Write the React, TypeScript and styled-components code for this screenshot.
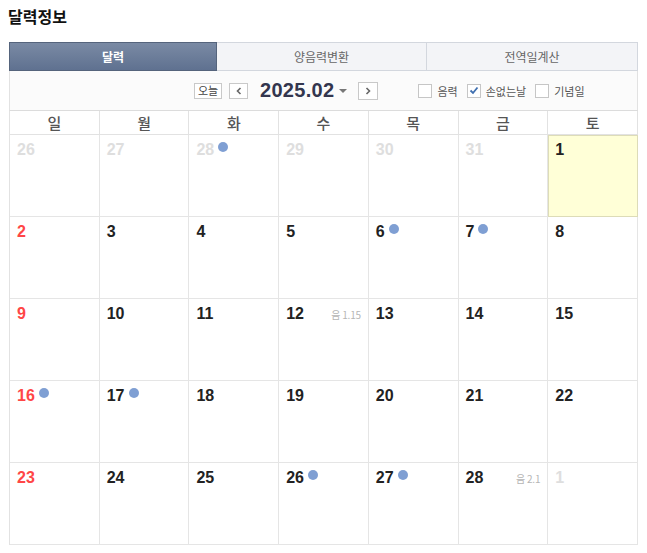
import React, { FunctionComponent } from 'react'
import styled, { createGlobalStyle, css } from 'styled-components'

const GlobalStyle = createGlobalStyle`
  html, body {
    margin: 0;
    padding: 0;
    background: #fff;
  }
  body {
    font-family: "Noto Sans CJK KR", "Noto Sans", sans-serif;
  }
`

const Page = styled.div`
  padding: 4px 9px 0 9px;
  width: 629px;
`

const Title = styled.h1`
  margin: 0 0 0 -1px;
  height: 38px;
  font-size: 16px;
  font-weight: 700;
  color: #111;
  line-height: 24px;
`

const Tabs = styled.div`
  display: grid;
  grid-template-columns: 208px 210px 1fr;
  height: 29px;
`

const TabButton = styled.div<{ $active?: boolean }>`
  display: flex;
  align-items: center;
  justify-content: center;
  font-size: 12px;
  color: #666;
  background: #f3f4f7;
  border: 1px solid #d3d7de;
  border-left: none;
  ${({ $active }) =>
    $active &&
    css`
      color: #fff;
      font-weight: 700;
      background: linear-gradient(#7a8aa4, #5f7190);
      border: 1px solid #55647c;
    `}
`

const Toolbar = styled.div`
  display: flex;
  align-items: center;
  height: 39px;
  padding-left: 184px;
  background: #fbfbfb;
  border-left: 1px solid #e2e2e2;
  border-right: 1px solid #e2e2e2;
  box-sizing: border-box;
`

const SmallButton = styled.span<{ $w: number }>`
  display: inline-flex;
  align-items: center;
  justify-content: center;
  width: ${({ $w }) => $w}px;
  height: 16px;
  box-sizing: border-box;
  border: 1px solid #c9c9c9;
  background: #fff;
  font-size: 11px;
  color: #444;
  line-height: 1;
`

const MonthTitle = styled.span`
  display: inline-flex;
  align-items: center;
  margin: 0 11px 0 12px;
  font-family: "Liberation Sans", Arial, sans-serif;
  font-size: 20px;
  font-weight: 700;
  color: #33364e;
  letter-spacing: 0.3px;
`

const Caret = styled.span`
  margin-left: 5px;
  width: 0;
  height: 0;
  border-left: 4px solid transparent;
  border-right: 4px solid transparent;
  border-top: 4px solid #777;
`

const Checks = styled.div`
  display: flex;
  align-items: center;
  margin-left: 40px;
  gap: 9px;
`

const CheckItem = styled.label`
  display: inline-flex;
  align-items: center;
  gap: 5px;
  font-size: 11px;
  color: #555;
`

const Box = styled.span`
  display: inline-flex;
  align-items: center;
  justify-content: center;
  width: 12px;
  height: 12px;
  border: 1px solid #c6c6c6;
  background: #fff;
`

const Grid = styled.div`
  display: grid;
  grid-template-columns: repeat(7, 1fr);
  border-left: 1px solid #e2e2e2;
  border-top: 1px solid #dcdcdc;
`

const HeadCell = styled.div`
  height: 23px;
  display: flex;
  align-items: center;
  justify-content: center;
  font-size: 15px;
  font-weight: 500;
  color: #555;
  border-right: 1px solid #e2e2e2;
  border-bottom: 1px solid #e2e2e2;
`

const DayCell = styled.div<{ $today?: boolean }>`
  height: 82px;
  padding: 5px 7px 0 7px;
  box-sizing: border-box;
  border-right: 1px solid #e5e5e5;
  border-bottom: 1px solid #e5e5e5;
  display: flex;
  align-items: flex-start;
  ${({ $today }) =>
    $today &&
    css`
      background: #ffffd7;
      outline: 1px solid #dddcb8;
      outline-offset: -1px;
    `}
`

const DayNum = styled.span<{ $tone: 'normal' | 'sun' | 'other' }>`
  font-family: "Liberation Sans", Arial, sans-serif;
  font-size: 16px;
  font-weight: 700;
  line-height: 20px;
  color: ${({ $tone }) =>
    $tone === 'sun' ? '#ff4646' : $tone === 'other' ? '#dedede' : '#222'};
`

const Dot = styled.span`
  display: inline-block;
  width: 10px;
  height: 10px;
  margin: 2px 0 0 4px;
  border-radius: 50%;
  background: #7f9fd3;
`

const Lunar = styled.span`
  margin-left: auto;
  padding-top: 3px;
  font-size: 10px;
  color: #b5b5b5;
  letter-spacing: -0.2px;
`

type Day = { n: number; tone: 'normal' | 'sun' | 'other'; dot?: boolean; lunar?: string; today?: boolean }

const weeks: Day[][] = [
  [
    { n: 26, tone: 'other' },
    { n: 27, tone: 'other' },
    { n: 28, tone: 'other', dot: true },
    { n: 29, tone: 'other' },
    { n: 30, tone: 'other' },
    { n: 31, tone: 'other' },
    { n: 1, tone: 'normal', today: true },
  ],
  [
    { n: 2, tone: 'sun' },
    { n: 3, tone: 'normal' },
    { n: 4, tone: 'normal' },
    { n: 5, tone: 'normal' },
    { n: 6, tone: 'normal', dot: true },
    { n: 7, tone: 'normal', dot: true },
    { n: 8, tone: 'normal' },
  ],
  [
    { n: 9, tone: 'sun' },
    { n: 10, tone: 'normal' },
    { n: 11, tone: 'normal' },
    { n: 12, tone: 'normal', lunar: '음 1.15' },
    { n: 13, tone: 'normal' },
    { n: 14, tone: 'normal' },
    { n: 15, tone: 'normal' },
  ],
  [
    { n: 16, tone: 'sun', dot: true },
    { n: 17, tone: 'normal', dot: true },
    { n: 18, tone: 'normal' },
    { n: 19, tone: 'normal' },
    { n: 20, tone: 'normal' },
    { n: 21, tone: 'normal' },
    { n: 22, tone: 'normal' },
  ],
  [
    { n: 23, tone: 'sun' },
    { n: 24, tone: 'normal' },
    { n: 25, tone: 'normal' },
    { n: 26, tone: 'normal', dot: true },
    { n: 27, tone: 'normal', dot: true },
    { n: 28, tone: 'normal', lunar: '음 2.1' },
    { n: 1, tone: 'other' },
  ],
]

const dayNames = ['일', '월', '화', '수', '목', '금', '토']

const Check: FunctionComponent<{ checked?: boolean; label: string }> = ({ checked, label }) => (
  <CheckItem>
    <Box>
      {checked && (
        <svg width="10" height="9" viewBox="0 0 10 9">
          <path d="M1.5 4.5 L4 7 L8.5 1.5" fill="none" stroke="#3f6fb0" strokeWidth="1.8" />
        </svg>
      )}
    </Box>
    {label}
  </CheckItem>
)

const Arrow: FunctionComponent<{ dir: 'l' | 'r' }> = ({ dir }) => (
  <svg width="6" height="8" viewBox="0 0 6 8">
    <path
      d={dir === 'l' ? 'M4.5 1 L1.5 4 L4.5 7' : 'M1.5 1 L4.5 4 L1.5 7'}
      fill="none"
      stroke="#666"
      strokeWidth="1.6"
    />
  </svg>
)

const App: FunctionComponent = () => (
  <Page>
    <GlobalStyle />
    <Title>달력정보</Title>
    <Tabs>
      <TabButton $active>달력</TabButton>
      <TabButton>양음력변환</TabButton>
      <TabButton>전역일계산</TabButton>
    </Tabs>
    <Toolbar>
      <SmallButton $w={28}>오늘</SmallButton>
      <SmallButton $w={19} style={{ marginLeft: 7 }}>
        <Arrow dir="l" />
      </SmallButton>
      <MonthTitle>
        2025.02
        <Caret />
      </MonthTitle>
      <SmallButton $w={20} style={{ height: 18 }}>
        <Arrow dir="r" />
      </SmallButton>
      <Checks>
        <Check label="음력" />
        <Check checked label="손없는날" />
        <Check label="기념일" />
      </Checks>
    </Toolbar>
    <Grid>
      {dayNames.map((d) => (
        <HeadCell key={d}>{d}</HeadCell>
      ))}
      {weeks.flat().map((d, i) => (
        <DayCell key={i} $today={d.today}>
          <DayNum $tone={d.tone}>{d.n}</DayNum>
          {d.dot && <Dot />}
          {d.lunar && <Lunar>{d.lunar}</Lunar>}
        </DayCell>
      ))}
    </Grid>
  </Page>
)

export default App
